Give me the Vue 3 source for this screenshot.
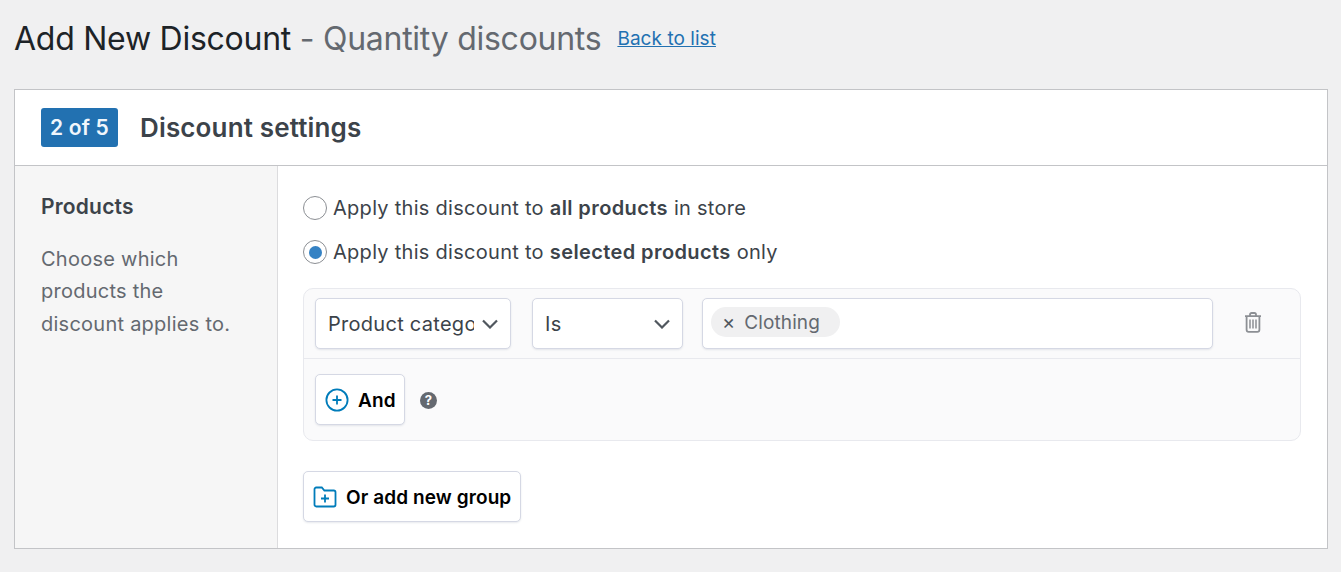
<template>
  <div class="page">
    <div class="heading">
      <h1 class="title">Add New Discount <span class="title-sub">- Quantity discounts</span></h1>
      <a class="back" href="#">Back to list</a>
    </div>

    <section class="panel">
      <header class="panel-head">
        <span class="step">2 of 5</span>
        <h2 class="panel-title">Discount settings</h2>
      </header>

      <div class="panel-body">
        <aside class="side">
          <h3 class="side-title">Products</h3>
          <p class="side-text">Choose which products the discount applies to.</p>
        </aside>

        <main class="main">
          <label v-for="opt in options" :key="opt.key" class="radio-row">
            <span class="radio" :class="{ on: opt.key === selected }"></span>
            <span>Apply this discount to <strong>{{ opt.bold }}</strong> {{ opt.tail }}</span>
          </label>

          <div class="group">
            <div class="cond-row">
              <div class="select select-type">
                <span class="select-text">Product category</span>
                <svg class="chev" viewBox="0 0 16 10"><path d="M1 1.500 8 8.500l7-7" /></svg>
              </div>
              <div class="select select-op">
                <span class="select-text">Is</span>
                <svg class="chev" viewBox="0 0 16 10"><path d="M1 1.500 8 8.500l7-7" /></svg>
              </div>
              <div class="tags">
                <span class="tag"><span class="tag-x">×</span>Clothing</span>
              </div>
              <button class="trash" type="button" aria-label="Delete">
                <svg viewBox="0 0 18 21" width="18" height="21">
                  <path class="trash-line" d="M1 4.200h16M6 4V2.600C6 1.700 6.700 1 7.600 1h2.800c.9 0 1.600.7 1.600 1.600V4M2.600 4.400v13.400c0 1.200.9 2.100 2.100 2.100h8.600c1.200 0 2.100-.9 2.100-2.100V4.400" />
                  <path class="trash-bars" d="M6 7.500v9M9 7.500v9M12 7.500v9" />
                </svg>
              </button>
            </div>
            <div class="and-row">
              <button class="btn btn-and" type="button">
                <svg viewBox="0 0 24 24" width="24" height="24">
                  <circle cx="12" cy="12" r="10.600" />
                  <path d="M12 7.500v9M7.500 12h9" />
                </svg>
                And
              </button>
              <span class="help">?</span>
            </div>
          </div>

          <button class="btn btn-or" type="button">
            <svg viewBox="0 0 24 22" width="24" height="22">
              <path d="M1.500 3.200c0-.9.7-1.700 1.700-1.700h5.600l2.600 3h9.400c.9 0 1.700.8 1.700 1.700v12.600c0 .9-.8 1.700-1.700 1.700H3.200c-1 0-1.700-.8-1.700-1.700z" />
              <path d="M12 8.500v8M8 12.500h8" />
            </svg>
            Or add new group
          </button>
        </main>
      </div>
    </section>
  </div>
</template>

<script setup>
import { ref } from 'vue';

const selected = ref('selected');

const options = [
  { key: 'all', bold: 'all products', tail: 'in store' },
  { key: 'selected', bold: 'selected products', tail: 'only' }
];
</script>

<style scoped>
.page {
  min-height: 572px;
  padding: 0 13px 0 14px;
  box-sizing: border-box;
  background: #f0f0f1;
  font-family: Inter, "Liberation Sans", sans-serif;
  color: #3c434a;
}

.heading {
  height: 89px;
  display: flex;
  align-items: flex-start;
  gap: 16px;
  padding-top: 19px;
  box-sizing: border-box;
}

.title {
  margin: 0;
  font-size: 32px;
  line-height: 40px;
  font-weight: 400;
  letter-spacing: -0.26px;
  color: #1d2327;
}

.title-sub {
  color: #646970;
}

.back {
  margin-top: 8px;
  font-size: 19px;
  line-height: 24px;
  letter-spacing: 0.05px;
  color: #2271b1;
}

.panel {
  height: 460px;
  box-sizing: border-box;
  display: flex;
  flex-direction: column;
  background: #fff;
  border: 1px solid #c3c4c7;
}

.panel-head {
  flex: 0 0 76px;
  box-sizing: border-box;
  display: flex;
  align-items: center;
  gap: 22px;
  padding: 0 26px;
  border-bottom: 1px solid #c3c4c7;
}

.step {
  width: 77px;
  height: 39px;
  display: flex;
  align-items: center;
  justify-content: center;
  background: #2271b1;
  border-radius: 3px;
  color: #f0f6fc;
  font-size: 21px;
  font-weight: 600;
  letter-spacing: 0.2px;
}

.panel-title {
  margin: 0;
  font-size: 26px;
  font-weight: 600;
  letter-spacing: 0.15px;
}

.panel-body {
  flex: 1;
  display: flex;
}

.side {
  flex: 0 0 263px;
  box-sizing: border-box;
  padding: 28px 26px 0;
  background: #f6f6f6;
  border-right: 1px solid #dcdcde;
}

.side-title {
  margin: 0 0 23px;
  font-size: 21px;
  line-height: 26px;
  font-weight: 600;
  letter-spacing: 0.2px;
}

.side-text {
  margin: 0;
  width: 205px;
  font-size: 20px;
  line-height: 32.400px;
  letter-spacing: 0.25px;
  color: #646970;
}

.main {
  flex: 1;
  padding: 28px 26px 0 25px;
}

.radio-row {
  display: flex;
  align-items: center;
  gap: 6px;
  height: 28px;
  margin-bottom: 16px;
  font-size: 20px;
  letter-spacing: 0.28px;
}

.radio-row strong {
  font-weight: 600;
  letter-spacing: 0.4px;
}

.radio {
  width: 24px;
  height: 24px;
  box-sizing: border-box;
  border: 1px solid #8c8f94;
  border-radius: 50%;
  display: flex;
  align-items: center;
  justify-content: center;
}

.radio.on::before {
  content: "";
  width: 13px;
  height: 13px;
  border-radius: 50%;
  background: #3582c4;
}

.group {
  margin-top: 22px;
  height: 153px;
  box-sizing: border-box;
  border: 1px solid #e8e9ee;
  border-radius: 10px;
  background: #fafafb;
}

.cond-row {
  height: 70px;
  box-sizing: border-box;
  display: flex;
  align-items: flex-start;
  padding: 9px 0 0 11px;
  border-bottom: 1px solid #e8e9ee;
}

.select,
.tags,
.btn {
  box-sizing: border-box;
  background: #fff;
  border: 1px solid #d5d8e4;
  border-radius: 5px;
  box-shadow: 0 1px 2px rgba(60, 70, 110, 0.12);
}

.select {
  height: 51px;
  display: flex;
  align-items: center;
  padding: 1px 12px 0;
  font-size: 20px;
  letter-spacing: 0.28px;
}

.select-type {
  width: 196px;
  margin-right: 21px;
}

.select-op {
  width: 151px;
  margin-right: 19px;
}

.select-text {
  flex: 1;
  min-width: 0;
  overflow: hidden;
  white-space: nowrap;
}

.chev {
  flex: 0 0 16px;
  width: 16px;
  height: 10px;
  margin-left: 8px;
  fill: none;
  stroke: #50575e;
  stroke-width: 2.200;
}

.tags {
  width: 511px;
  height: 51px;
  padding: 8px;
}

.tag {
  display: inline-flex;
  align-items: center;
  height: 30px;
  padding: 0 20px 0 11px;
  border-radius: 15px;
  background: #f0f0f1;
  color: #646970;
  font-size: 19px;
  letter-spacing: 0.1px;
}

.tag-x {
  margin-right: 9px;
  font-size: 20px;
  color: #50575e;
}

.trash {
  margin: 14px 0 0 31px;
  padding: 0;
  border: 0;
  background: none;
  line-height: 0;
}

.trash-line,
.trash-bars {
  fill: none;
  stroke: #8c8f94;
}

.trash-line {
  stroke-width: 1.800;
}

.trash-bars {
  stroke-width: 1.500;
}

.and-row {
  display: flex;
  align-items: center;
  gap: 15px;
  padding: 15px 0 0 11px;
}

.btn {
  display: flex;
  align-items: center;
  height: 51px;
  padding-top: 2px;
  font-family: inherit;
  font-size: 19px;
  font-weight: 600;
  letter-spacing: 0.1px;
  color: #000;
}

.btn svg {
  fill: none;
  stroke: #007cba;
  stroke-width: 1.800;
}

.btn-and {
  width: 90px;
  gap: 9px;
  padding-left: 9px;
  padding-right: 4px;
}

.help {
  width: 17px;
  height: 17px;
  margin-top: 2px;
  border-radius: 50%;
  background: #646970;
  color: #fff;
  font-size: 13px;
  font-weight: 700;
  line-height: 17px;
  text-align: center;
}

.btn-or {
  width: 218px;
  margin-top: 30px;
  gap: 9px;
  padding-left: 9px;
  padding-right: 4px;
  white-space: nowrap;
}
</style>

<style>
body {
  margin: 0;
}
</style>
